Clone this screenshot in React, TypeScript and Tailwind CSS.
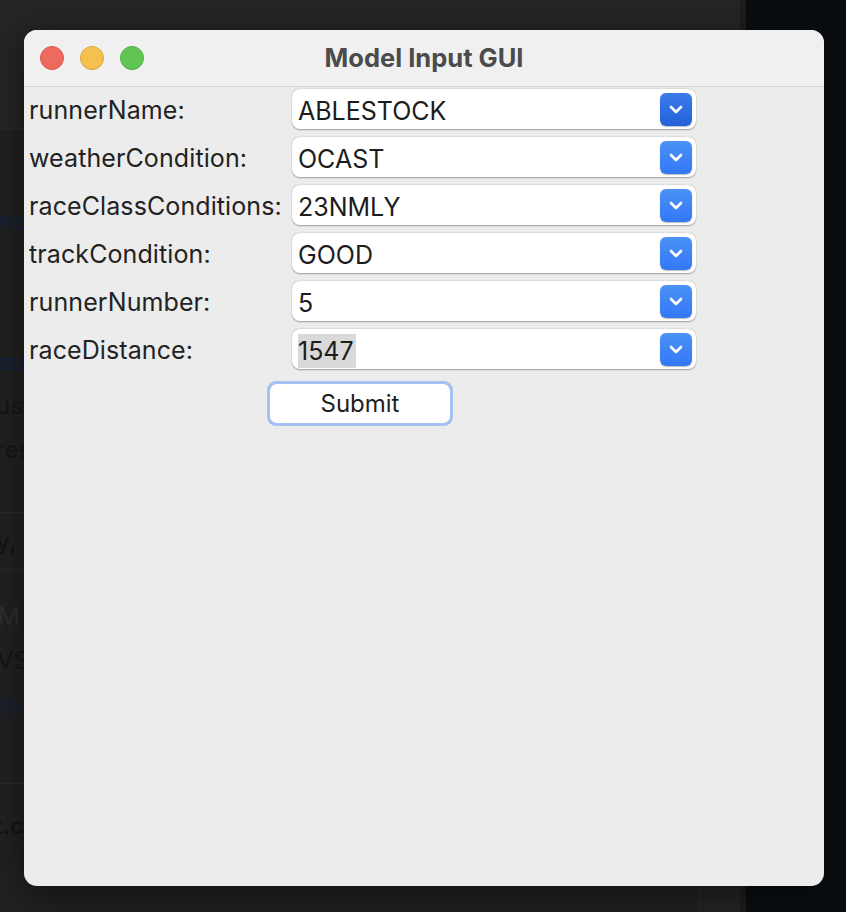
import React from "react";

const rows: { label: string; value: string; active?: boolean; selected?: boolean }[] = [
  { label: "runnerName:", value: "ABLESTOCK", active: true },
  { label: "weatherCondition:", value: "OCAST" },
  { label: "raceClassConditions:", value: "23NMLY" },
  { label: "trackCondition:", value: "GOOD" },
  { label: "runnerNumber:", value: "5" },
  { label: "raceDistance:", value: "1547", selected: true },
];

function Chevron() {
  return (
    <svg width="14" height="9" viewBox="0 0 14 9" fill="none">
      <path d="M2 2 L7 7 L12 2" stroke="white" strokeWidth="2.6" strokeLinecap="round" strokeLinejoin="round" />
    </svg>
  );
}

export default function App() {
  const font = { fontFamily: "Inter, 'Helvetica Neue', Arial, sans-serif" };
  return (
    <div className="relative w-[846px] h-[912px] overflow-hidden bg-[#222222]" style={font}>
      {/* desktop background */}
      <div className="flex h-full w-full">
        <div className="flex w-[698px] flex-col text-[24px]">
          <div className="h-[130px] shrink-0 border-b border-[#2c2c2c] bg-[#252525]" />
          <div className="h-[72px] shrink-0" />
          <div className="h-[38px] leading-[38px] text-[#16223a] -ml-[2px]">ee</div>
          <div className="h-[100px] shrink-0" />
          <div className="h-[44px] leading-[44px] font-bold text-[#15223a] -ml-[3px]">su</div>
          <div className="h-[44px] leading-[44px] text-[#161616] -ml-[4px]">ust</div>
          <div className="h-[44px] leading-[44px] text-[#161616] -ml-[4px]">res</div>
          <div className="h-[41px] shrink-0 border-b border-[#2c2c2c]" />
          <div className="h-[57px] leading-[57px] border-b border-[#2c2c2c] text-[#161616] font-semibold -ml-[4px]">y,</div>
          <div className="h-[25px] shrink-0" />
          <div className="h-[44px] leading-[44px] text-[#333] font-light -ml-[2px]">M</div>
          <div className="h-[44px] leading-[44px] text-[#151515] -ml-[3px]">VS</div>
          <div className="h-[44px] leading-[44px] text-[#16223a] -ml-[3px]">/p</div>
          <div className="h-[57px] shrink-0 border-b border-[#2c2c2c]" />
          <div className="h-[20px] shrink-0" />
          <div className="h-[44px] leading-[44px] text-[#151515] font-semibold -ml-[6px]">t.c</div>
        </div>
        <div className="w-[42px] border-l border-[#2a2a2a] bg-[#252525]" />
        <div className="w-[6px] bg-[#1d1d1d]" />
        <div className="flex-1 bg-[#0b0e11]" />
      </div>

      {/* window */}
      <div className="absolute left-[24px] top-[30px] flex h-[856px] w-[800px] flex-col overflow-hidden rounded-[13px] bg-[#ececec] shadow-[0_10px_40px_rgba(0,0,0,0.5)]">
        <div className="relative flex h-[57px] shrink-0 items-center border-b border-[#d2d2d2] bg-[#f0f0f0]">
          <div className="flex items-center gap-[16px] pl-[16px]">
            <div className="h-[24px] w-[24px] rounded-full border border-[#d9574b] bg-[#ee6a5f]" />
            <div className="h-[24px] w-[24px] rounded-full border border-[#dea53c] bg-[#f6c04f]" />
            <div className="h-[24px] w-[24px] rounded-full border border-[#4fae44] bg-[#61c554]" />
          </div>
          <div className="absolute inset-0 flex items-center justify-center pt-[1px] text-[25.5px] font-bold text-[#4b4b4b]">
            Model Input GUI
          </div>
        </div>

        <div className="flex flex-col gap-[8px] pt-[2px]">
          {rows.map((r) => (
            <div key={r.label} className="flex h-[40px] items-center">
              <div className="w-[268px] shrink-0 pl-[5px] pt-[4px] text-[25px] text-[#222] tracking-[0.1px]">{r.label}</div>
              <div className="flex h-[40px] w-[404px] items-center justify-between rounded-[8px] bg-white pl-[6px] pr-[4px] shadow-[0_0.5px_1.5px_rgba(0,0,0,0.35)]">
                <span
                  className={
                    "mt-[3px] text-[25px] leading-[34px] text-[#1c1c1c] " + (r.selected ? "bg-[#d9d9d9] pr-[2px]" : "")
                  }
                >
                  {r.value}
                </span>
                <div
                  className={
                    "flex h-[33px] w-[32px] items-center justify-center rounded-[6px] shadow-[0_0.5px_1px_rgba(0,0,0,0.25)] " +
                    (r.active
                      ? "bg-gradient-to-b from-[#3a7be9] to-[#2561da]"
                      : "bg-gradient-to-b from-[#4b91f8] to-[#3378f4]")
                  }
                >
                  <Chevron />
                </div>
              </div>
            </div>
          ))}
        </div>

        <div className="mt-[12px] pl-[243px]">
          <div className="flex h-[45px] w-[186px] items-center justify-center rounded-[9px] bg-[#a3c1f1] p-[3px]">
            <div className="flex h-full w-full items-center justify-center rounded-[7px] bg-white text-[24px] text-[#1f1f1f]">
              Submit
            </div>
          </div>
        </div>
      </div>
    </div>
  );
}
